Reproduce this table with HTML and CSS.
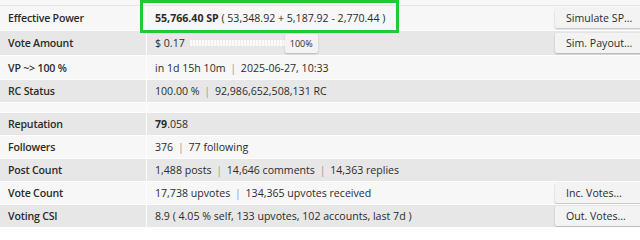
FILE: index.html
```html
<!DOCTYPE html>
<html>
<head>
<meta charset="utf-8">
<link rel="stylesheet" href="styles.css">
</head>
<body>
<div class="wrap">
  <table class="info">
    <tr class="top"><th></th><td></td><td class="act"></td></tr>
    <tr class="lt r1"><th>Effective Power</th><td><b>55,766.40 SP</b> ( 53,348.92 + 5,187.92 - 2,770.44 )</td><td class="act"><button class="btn">Simulate SP...</button></td></tr>
    <tr class="dk r2"><th>Vote Amount</th><td><div class="va"><span>$ 0.17</span><div class="slider"><div class="track"></div><span class="pct">100%</span></div></div></td><td class="act"><button class="btn">Sim. Payout...</button></td></tr>
    <tr class="lt r3"><th>VP ~&gt; 100 %</th><td>in 1d 15h 10m <span class="sep">|</span> 2025-06-27, 10:33</td><td class="act"></td></tr>
    <tr class="dk"><th>RC Status</th><td>100.00 % <span class="sep">|</span> 92,986,652,508,131 RC</td><td class="act"></td></tr>
    <tr class="sp"><th></th><td></td><td class="act"></td></tr>
    <tr class="dk"><th>Reputation</th><td><b>79</b>.058</td><td class="act"></td></tr>
    <tr class="lt"><th>Followers</th><td>376 <span class="sep">|</span> 77 following</td><td class="act"></td></tr>
    <tr class="dk"><th>Post Count</th><td>1,488 posts <span class="sep">|</span> 14,646 comments <span class="sep">|</span> 14,363 replies</td><td class="act"></td></tr>
    <tr class="lt"><th>Vote Count</th><td>17,738 upvotes <span class="sep">|</span> 134,365 upvotes received</td><td class="act"><button class="btn">Inc. Votes...</button></td></tr>
    <tr class="dk"><th>Voting CSI</th><td>8.9 ( 4.05 % self, 133 upvotes, 102 accounts, last 7d )</td><td class="act"><button class="btn">Out. Votes...</button></td></tr>
  </table>
  <div class="highlight"></div>
</div>
</body>
</html>
```
FILE: styles.css
```css
html, body {
  margin: 0;
  padding: 0;
  background: #fff;
  overflow: hidden;
}
body {
  font-family: "Open Sans", "DejaVu Sans", sans-serif;
  font-size: 10.6px;
  color: #2b2b2b;
}
.wrap {
  position: relative;
  width: 660px;
}
.info {
  width: 660px;
  border-collapse: collapse;
  box-shadow: 0 2px 3px rgba(0,0,0,0.18);
}
.info th, .info td {
  padding: 0 0 0 8px;
  height: 22px;
  text-align: left;
  white-space: nowrap;
  border-bottom: 1px solid #fdfdfd;
}
.info th {
  width: 138px;
  font-weight: 600;
  letter-spacing: -0.2px;
  border-right: 1px solid #fdfdfd;
}
.info td b { font-weight: 700; }
.info tr.r1 th, .info tr.r1 td,
.info tr.r2 th, .info tr.r2 td { height: 24px; }
.info tr.r3 th, .info tr.r3 td { height: 23px; }
.info td.act {
  width: 105px;
  padding: 0;
}
.info tr.top th, .info tr.top td {
  height: 5px;
  border-bottom: 1px solid #e6e6e6;
  background: #f8f8f8;
}
.info tr.sp th, .info tr.sp td {
  height: 9px;
  background: #f8f8f8;
}
.lt th, .lt td { background: #f7f7f7; }
.dk th, .dk td { background: #e7e7e7; }
.sep { color: #9a9a9a; padding: 0 2px; }
.btn {
  font-family: inherit;
  font-size: 10.6px;
  color: #2b2b2b;
  height: 20px;
  width: 100px;
  padding: 0 0 0 11px;
  text-align: left;
  background: #f3f3f3;
  border: none;
  border-radius: 2px;
  box-shadow: 0 1px 2px rgba(0,0,0,0.25);
  display: block;
}
.va {
  display: flex;
  align-items: center;
}
.slider {
  display: flex;
  align-items: center;
  margin-left: 5px;
}
.track {
  width: 95px;
  height: 6px;
  background: repeating-linear-gradient(90deg, #fbfbfb 0 2px, #ededed 2px 3px);
}
.pct {
  font-size: 9px;
  height: 19px;
  width: 33px;
  line-height: 19px;
  text-align: center;
  background: #f3f3f3;
  box-shadow: 0 1px 2px rgba(0,0,0,0.22);
  border-radius: 2px;
}
.highlight {
  position: absolute;
  left: 140px;
  top: 0;
  width: 253px;
  height: 27px;
  border: 3px solid #1fc93a;
}
```
